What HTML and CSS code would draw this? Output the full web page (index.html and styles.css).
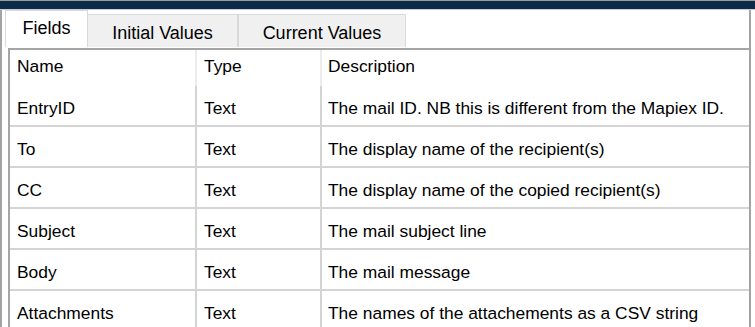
FILE: index.html
```html
<!DOCTYPE html>
<html>
<head>
<meta charset="utf-8">
<link rel="stylesheet" href="styles.css">
</head>
<body>
<div class="window">
  <div class="titlebar"></div>
  <div class="frame">
    <div class="tabs">
      <div class="tab tab-active">Fields</div>
      <div class="tab tab-initial">Initial Values</div>
      <div class="tab tab-current">Current Values</div>
    </div>
    <div class="panel">
      <div class="grid">
        <div class="row head">
          <div class="cell c-name">Name</div>
          <div class="cell c-type">Type</div>
          <div class="cell c-desc">Description</div>
        </div>
        <div class="row">
          <div class="cell c-name">EntryID</div>
          <div class="cell c-type">Text</div>
          <div class="cell c-desc">The mail ID. NB this is different from the Mapiex ID.</div>
        </div>
        <div class="row">
          <div class="cell c-name">To</div>
          <div class="cell c-type">Text</div>
          <div class="cell c-desc">The display name of the recipient(s)</div>
        </div>
        <div class="row">
          <div class="cell c-name">CC</div>
          <div class="cell c-type">Text</div>
          <div class="cell c-desc">The display name of the copied recipient(s)</div>
        </div>
        <div class="row">
          <div class="cell c-name">Subject</div>
          <div class="cell c-type">Text</div>
          <div class="cell c-desc">The mail subject line</div>
        </div>
        <div class="row">
          <div class="cell c-name">Body</div>
          <div class="cell c-type">Text</div>
          <div class="cell c-desc">The mail message</div>
        </div>
        <div class="row">
          <div class="cell c-name">Attachments</div>
          <div class="cell c-type">Text</div>
          <div class="cell c-desc">The names of the attachements as a CSV string</div>
        </div>
      </div>
    </div>
  </div>
</div>
</body>
</html>
```
FILE: styles.css
```css
html, body {
  margin: 0;
  padding: 0;
  background: #ffffff;
  overflow: hidden;
}
body {
  width: 755px;
  height: 327px;
  font-family: "Liberation Sans", Arial, sans-serif;
  font-size: 17.4px;
  color: #000000;
}
.window {
  width: 755px;
  height: 327px;
  overflow: hidden;
}
.titlebar {
  height: 8px;
  border-top: 1px solid #9a9a9a;
  background: #0e2a49;
  border-bottom: 1px solid #c8ccd2;
}
.frame {
  margin-left: 0;
  width: 751px;
  height: 320px;
  border-left: 2px solid #a3a3a3;
  border-right: 2px solid #a3a3a3;
  box-sizing: border-box;
  padding-left: 3px;
}
.tabs {
  display: flex;
  align-items: flex-end;
  height: 37px;
}
.tab {
  box-sizing: border-box;
  border: 1px solid #d9d9d9;
  border-bottom: none;
  text-align: center;
  white-space: nowrap;
  line-height: 20px;
  font-size: 18px;
}
.tab-active {
  width: 83px;
  height: 37px;
  background: #ffffff;
  padding-top: 7px;
}
.tab-initial {
  width: 150px;
  height: 33px;
  background: #f0f0f0;
  padding-top: 8px;
  border-left: none;
}
.tab-current {
  width: 168px;
  height: 33px;
  background: #f0f0f0;
  padding-top: 8px;
  border-left: 1px solid #d9d9d9;
}
.panel {
  margin-top: 1px;
  margin-left: 3px;
}
.grid {
  border-top: 2px solid #a5a5a5;
  border-left: 2px solid #a5a5a5;
}
.row {
  display: grid;
  grid-template-columns: 187px 125px 1fr;
  height: 41px;
  box-sizing: border-box;
  border-bottom: 2px solid #d4d4d4;
}
.row.head {
  height: 36px;
  border-bottom: none;
}
.cell {
  box-sizing: border-box;
  padding-top: 12px;
  line-height: 20px;
  white-space: nowrap;
  overflow: hidden;
}
.head .cell {
  padding-top: 6px;
}
.c-name {
  padding-left: 7px;
  border-right: 2px solid #d4d4d4;
}
.c-type {
  padding-left: 7px;
  border-right: 2px solid #d4d4d4;
}
.c-desc {
  padding-left: 6px;
}
.head .c-name,
.head .c-type {
  border-right: 2px solid #ececec;
}
```
